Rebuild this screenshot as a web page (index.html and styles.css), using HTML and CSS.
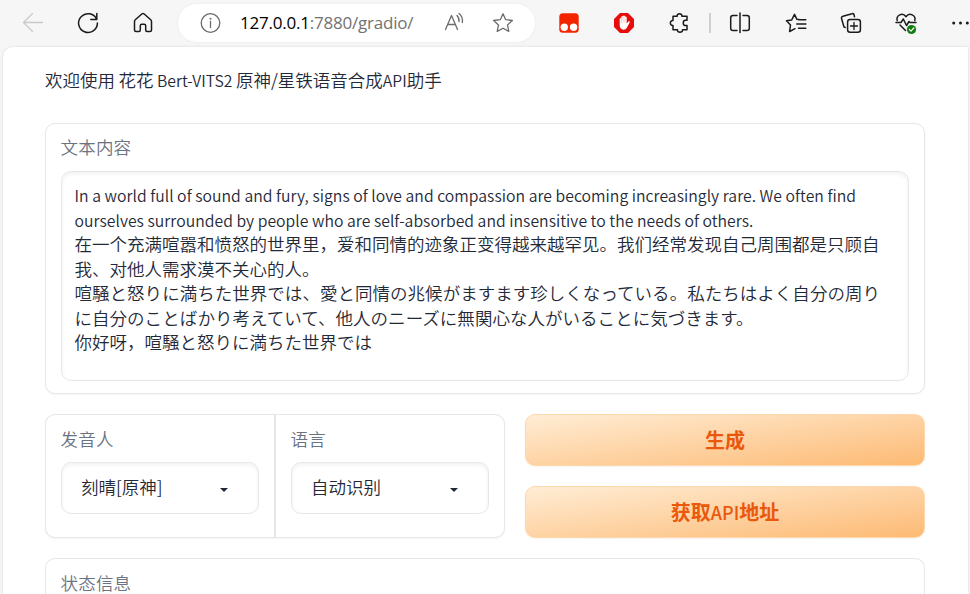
FILE: index.html
```html
<!DOCTYPE html>
<html lang="zh-CN">
<head>
<meta charset="utf-8">
<title>Bert-VITS2</title>
<link rel="stylesheet" href="styles.css">
</head>
<body>
<header class="toolbar">
  <svg class="icon back" viewBox="0 0 24 24"><path d="M21.500 11.500H2.500M11.500 2.500L2.500 11.500L11.500 20.500"/></svg>
  <svg class="icon" viewBox="0 0 24 24"><path d="M20.700 8.500A9.400 9.400 0 1 0 21.400 12M20.800 2.500V8.500H14.800" stroke-width="1.500"/></svg>
  <svg class="icon" viewBox="0 0 24 24"><path d="M3.500 10.500Q3.500 9.500 4.300 8.800L10.800 3Q12 2 13.200 3L19.700 8.800Q20.500 9.500 20.500 10.500V19Q20.500 20.500 19 20.500H16Q14.700 20.500 14.700 19V14.700Q14.700 13.200 13.200 13.200H10.800Q9.300 13.200 9.300 14.700V19Q9.300 20.500 8 20.500H5Q3.500 20.500 3.500 19Z" stroke-width="1.500"/></svg>
  <div class="address">
    <svg class="icon info" viewBox="0 0 24 24"><circle cx="12.500" cy="12" r="9.300"/><path d="M12.500 10.500V16.500"/><circle class="dot" cx="12.500" cy="7.800" r="1"/></svg>
    <span class="url"><b>127.0.0.1</b>:7880/gradio/</span>
    <svg class="icon read" viewBox="0 0 24 24"><path d="M3.500 18.500L9.500 4.500L15.500 18.500M5.700 13.500H13.300M15 4.500Q17.500 7 17 10.500M17 2.500Q21.300 6 20.300 11.500" /></svg>
    <svg class="icon star" viewBox="0 0 24 24"><path d="M12 2.800L14.700 8.700L21.400 9.500L16.500 13.900L17.800 20.400L12 17.200L6.200 20.400L7.500 13.900L2.600 9.500L9.300 8.700Z"/></svg>
  </div>
  <svg class="icon monkey" viewBox="0 0 24 24"><rect class="red" x="2.300" y="2.300" width="19.400" height="19.400" rx="3.500"/><circle class="white" cx="7.300" cy="16.300" r="3.700"/><circle class="white" cx="16.600" cy="16.300" r="3.700"/></svg>
  <svg class="icon" viewBox="0 0 24 24"><path class="stop" d="M8 2H16L22 8V16L16 22H8L2 16V8Z"/><path class="white" d="M7.700 13V7.600Q8.500 6.600 9.300 7.600V5.500Q10.200 4.500 11 5.500V5Q12 4 12.900 5V5.800Q14 5 14.700 6.200V12.500L16.400 10.500Q17.600 10 17.900 11L15 16.500Q13.800 18.700 11.500 18.700Q8 18.500 7.700 14.500Z"/><path d="M9.400 7V11.500M11.100 5.500V11M12.900 6V11.500" class="fingers"/></svg>
  <svg class="icon puzzle" viewBox="0 0 24 24"><path d="M5 5.200H9.200C8.500 2 14.500 2 13.800 5.200H19V9.300H17.500C14.500 9.300 14.500 14.500 17.500 14.500H19V18.800H14.500C15 22 9 22 9.500 18.800H5V14.500C1.500 15 1.500 9 5 9.500Z" stroke-width="1.500"/></svg>
  <i class="divider"></i>
  <svg class="icon split" viewBox="0 0 24 24"><path d="M9 4.500H5Q2.700 4.500 2.700 6.800V17.200Q2.700 19.500 5 19.500H9M15 4.500H19Q21.300 4.500 21.300 6.800V17.200Q21.300 19.500 19 19.500H15M12 2V21.500" stroke-width="1.500"/></svg>
  <svg class="icon favs" viewBox="0 0 24 24"><path d="M15 8.600L12.900 8.300L10.500 3.400L7.700 9L2.500 9.800L6.500 14L5.600 20.500L11 17.700M14.500 8.700H21.800M12.800 13H21.800M14.500 17.200H21.800" stroke-width="1.500"/></svg>
  <svg class="icon" viewBox="0 0 24 24"><path d="M15.500 5.800L15 3.800Q14.600 2.200 13 2.700L4 5.200Q2 5.700 2.600 7.700L4.700 15Q5 16.300 6.200 16.500" stroke-width="1.500"/><rect x="8.600" y="8.600" width="12.800" height="12.600" rx="2.500" stroke-width="1.500"/><path d="M15 11.500V18.500M11.500 15H18.500"/></svg>
  <svg class="icon" viewBox="0 0 24 24"><path d="M3.200 9.500C1.800 4.500 8.500 0.800 12 5.700C15.500 0.800 22.200 4.500 20.800 9.500M2 11.500H7L9.300 8L12.500 14.500L15 10.500L16 11.500H22M6 14L11.500 19.500" stroke-width="1.500"/><circle class="green" cx="17.500" cy="18.500" r="4.600"/><path class="tick" d="M15.400 18.500L17 20.100L19.800 17"/></svg>
  <svg class="icon" viewBox="0 0 24 24"><circle class="dot" cx="4.700" cy="12" r="1.500"/><circle class="dot" cx="11.500" cy="12" r="1.500"/><circle class="dot" cx="18.300" cy="12" r="1.500"/></svg>
</header>
<main class="page">
  <p class="title">欢迎使用 花花 <span class="latin">Bert-VITS2</span> 原神/星铁语音合成<span class="latin">API</span>助手</p>
  <section class="block">
    <div class="label">文本内容</div>
    <div class="textarea">
      <div class="en">In a world full of sound and fury, signs of love and compassion are becoming increasingly rare. We often find</div>
      <div class="en">ourselves surrounded by people who are self-absorbed and insensitive to the needs of others.</div>
      <div class="cjk">在一个充满喧嚣和愤怒的世界里，爱和同情的迹象正变得越来越罕见。我们经常发现自己周围都是只顾自</div>
      <div>我、对他人需求漠不关心的人。</div>
      <div lang="ja">喧騒と怒りに満ちた世界では、愛と同情の兆候がますます珍しくなっている。私たちはよく自分の周り</div>
      <div lang="ja">に自分のことばかり考えていて、他人のニーズに無関心な人がいることに気づきます。</div>
      <div>你好呀，喧騒と怒りに満ちた世界では</div>
    </div>
  </section>
  <section class="row">
    <div class="form">
      <div class="field"><div class="label">发音人</div><div class="select"><span>刻晴[原神]</span><i class="caret"></i></div></div>
      <div class="field"><div class="label">语言</div><div class="select"><span>自动识别</span><i class="caret"></i></div></div>
    </div>
    <div class="actions">
      <button class="primary">生成</button>
      <button class="primary">获取<span class="api">API</span>地址</button>
    </div>
  </section>
  <section class="block status"><div class="label">状态信息</div></section>
</main>
</body>
</html>
```
FILE: styles.css
```css
* { box-sizing: border-box; }
body {
  margin: 0;
  height: 594px;
  overflow: hidden;
  background: #f6f6f6;
  color: #1f2937;
  font-family: "Noto Sans CJK SC", sans-serif;
  font-size: 17.5px;
  font-weight: 350;
  line-height: 24.5px;
}
.toolbar {
  display: flex;
  align-items: center;
  height: 46px;
  padding-left: 21px;
  gap: 31px;
}
.icon {
  flex: none;
  width: 24px;
  height: 24px;
  fill: none;
  stroke: #1b1b1b;
  stroke-width: 1.3;
  stroke-linejoin: round;
  stroke-linecap: round;
}
.icon .dot { fill: #1b1b1b; stroke: none; }
.back { stroke: #c9c9c9; }
.address {
  display: flex;
  flex: none;
  align-items: center;
  width: 357px;
  height: 38px;
  margin: 0 -9px 0 -8px;
  padding: 0 20px;
  border-radius: 19px;
  background: #fff;
  box-shadow: 0 0 3px rgba(0, 0, 0, .06);
}
.address .icon { stroke: #6b6b6b; }
.address .info .dot { fill: #6b6b6b; }
.url {
  width: 174px;
  margin-left: 18px;
  color: #727272;
  font: 400 17px/24px "Open Sans", sans-serif;
  letter-spacing: -.22px;
  white-space: nowrap;
}
.url b { color: #000; font-weight: 400; }
.read { margin-left: 28px; }
.star { margin-left: 25px; }
.red { fill: #f32500; stroke: none; }
.white { fill: #fff; stroke: none; }
.stop { fill: #e60d0d; stroke: none; }
.icon .fingers { stroke: #f4a0a0; stroke-width: .5; }
.puzzle { margin: 0 -1px 0 1px; }
.divider { flex: none; width: 2px; height: 20px; margin: 0 -14px 0 -13px; background: #cfcfcf; }
.favs { margin-left: 1px; }
.green { fill: #107c10; stroke: none; }
.icon .tick { stroke: #fff; stroke-width: 1.2; }
.page {
  height: 547px;
  margin: 1px 2px 0 3px;
  padding: 21px 43px 0 42px;
  border-radius: 10px 0 0 0;
  background: #fff;
  box-shadow: 0 0 3px rgba(0, 0, 0, .12);
}
.title { height: 25px; margin: 0 0 30px; white-space: nowrap; word-spacing: -.4px; }
.latin { font-size: 15.75px; }
.block {
  height: 271px;
  padding: 11px 15px 0;
  border: 1px solid #e5e7eb;
  border-radius: 10px;
  background: #fff;
  box-shadow: 0 1px 2px rgba(0, 0, 0, .05);
}
.label { margin: 0 0 11.5px -.5px; color: #6b7280; letter-spacing: .2px; }
.textarea {
  height: 210px;
  padding: 12px 12.5px;
  border: 1px solid #e5e7eb;
  border-radius: 10px;
  box-shadow: inset 0 2px 4px rgba(0, 0, 0, .06);
  white-space: nowrap;
}
.textarea [lang="ja"] { font-family: "Noto Sans CJK JP", sans-serif; letter-spacing: .03px; }
.en { font-size: 15.75px; letter-spacing: .033px; }
.cjk { margin-top: -1px; }
.row { display: flex; gap: 20px; margin-top: 20px; }
.form {
  display: grid;
  grid-template-columns: 1fr 1fr;
  gap: 2px;
  width: 460px;
  height: 124px;
  border: 1px solid #e5e7eb;
  border-radius: 10px;
  background: #e5e7eb;
  overflow: hidden;
  box-shadow: 0 1px 2px rgba(0, 0, 0, .05);
}
.field { padding: 12px 15px; background: #fff; }
.field .label { margin-bottom: 10.5px; }
.select {
  display: flex;
  align-items: center;
  justify-content: space-between;
  width: 198px;
  height: 52px;
  padding: 0 30px 2px 19px;
  border: 1px solid #e5e7eb;
  border-radius: 10px;
  box-shadow: inset 0 2px 4px rgba(0, 0, 0, .06);
}
.caret { margin-top: 5px; border: 4.5px solid transparent; border-top-color: #1f2937; border-bottom: 0; }
.actions { display: grid; flex: 1; gap: 20px; }
.primary {
  height: 52px;
  padding: 0;
  border: 1px solid #fed7aa;
  border-radius: 10px;
  background: linear-gradient(to bottom right, #ffedd5, #fdba74);
  box-shadow: 0 1px 2px rgba(0, 0, 0, .05);
  color: #ea580c;
  font: 700 20px/28px "Noto Sans CJK SC", sans-serif;
}
.api { font-size: 18px; font-weight: 500; }
.status {
  height: 36px;
  margin-top: 20px;
  padding-top: 12px;
  border-bottom: 0;
  border-radius: 10px 10px 0 0;
  box-shadow: none;
}
.status .label { height: 23px; margin-bottom: 0; }
```
